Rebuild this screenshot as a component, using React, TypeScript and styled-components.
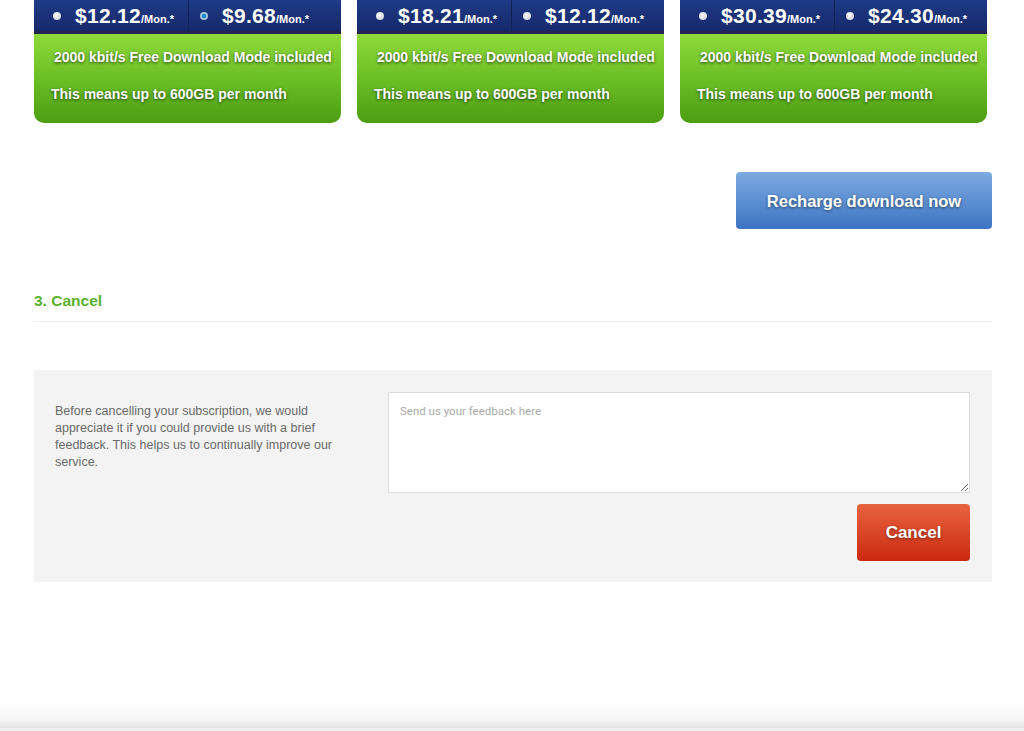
import React from 'react';
import styled, { createGlobalStyle } from 'styled-components';

const GlobalStyle = createGlobalStyle`
  html, body {
    margin: 0;
    padding: 0;
    background: #fff;
    font-family: "Liberation Sans", Arial, sans-serif;
  }
`;

const plans = [
  { a: '$12.12', b: '$9.68', selected: 1 },
  { a: '$18.21', b: '$12.12', selected: -1 },
  { a: '$30.39', b: '$24.30', selected: -1 },
];

function App() {
  return (
    <Page>
      <GlobalStyle />
      <Content>
        <Cards>
          {plans.map((p, i) => (
            <Card key={i}>
              <PriceBar>
                <PriceCell>
                  <Radio $active={p.selected === 0} />
                  <Price>{p.a}</Price>
                  <Per>/Mon.*</Per>
                </PriceCell>
                <PriceCell $divider>
                  <Radio $active={p.selected === 1} />
                  <Price>{p.b}</Price>
                  <Per>/Mon.*</Per>
                </PriceCell>
              </PriceBar>
              <GreenBody>
                <Feature>2000 kbit/s Free Download Mode included</Feature>
                <Note>This means up to 600GB per month</Note>
              </GreenBody>
            </Card>
          ))}
        </Cards>
        <ActionRow>
          <RechargeBtn>Recharge download now</RechargeBtn>
        </ActionRow>
        <SectionTitle>3. Cancel</SectionTitle>
        <CancelPanel>
          <Explain>
            Before cancelling your subscription, we would appreciate it if you could provide us with a brief
            feedback. This helps us to continually improve our service.
          </Explain>
          <FormCol>
            <Feedback placeholder="Send us your feedback here" />
            <CancelBtn>Cancel</CancelBtn>
          </FormCol>
        </CancelPanel>
      </Content>
      <FooterShadow />
    </Page>
  );
}

const Page = styled.div`
  width: 1024px;
  height: 731px;
  position: relative;
  overflow: hidden;
  display: flex;
  flex-direction: column;
`;

const Content = styled.div`
  width: 958px;
  margin: 0 0 0 34px;
  flex: 1;
`;

const Cards = styled.div`
  display: grid;
  grid-template-columns: repeat(3, 307px);
  column-gap: 16px;
`;

const Card = styled.div`
  border-radius: 0 0 10px 10px;
  overflow: hidden;
`;

const PriceBar = styled.div`
  height: 31px;
  display: grid;
  grid-template-columns: 154px 1fr;
  background: linear-gradient(#1e3a86, #17296a);
  border-bottom: 3px solid #222554;
`;

const PriceCell = styled.div<{ $divider?: boolean }>`
  display: flex;
  align-items: center;
  padding-left: ${(p) => (p.$divider ? '11px' : '19px')};
  border-left: ${(p) => (p.$divider ? '1px solid #122256' : 'none')};
  color: #fff;
`;

const Radio = styled.span<{ $active?: boolean }>`
  width: 8px;
  height: 8px;
  border-radius: 50%;
  background: ${(p) =>
    p.$active
      ? 'radial-gradient(circle, #1a8fd0 0 2px, #a9c6dc 2.5px)'
      : 'radial-gradient(circle at 40% 40%, #ffffff, #c2c5cf)'};
  margin-right: 14px;
`;

const Price = styled.span`
  font-size: 21px;
  font-weight: bold;
  letter-spacing: 0.3px;
`;

const Per = styled.span`
  font-size: 11px;
  font-weight: bold;
  margin-top: 6px;
`;

const GreenBody = styled.div`
  height: 89px;
  background: linear-gradient(#8fd93a, #6abf25 50%, #4d9d12);
  color: #fff;
  font-weight: bold;
  font-size: 14px;
  text-shadow: 0 1px 3px rgba(0, 0, 0, 0.65);
  padding: 15px 0 0 17px;
  box-sizing: border-box;
`;

const Feature = styled.div`
  padding-left: 3px;
  height: 37px;
`;

const Note = styled.div``;

const ActionRow = styled.div`
  display: flex;
  justify-content: flex-end;
  margin-top: 49px;
`;

const RechargeBtn = styled.button`
  width: 256px;
  height: 57px;
  border: none;
  border-radius: 4px;
  background: linear-gradient(#7dabe2, #3d74c2);
  color: #fff;
  font-family: "Liberation Sans", Arial, sans-serif;
  font-weight: bold;
  font-size: 16.5px;
  padding-top: 2px;
  text-shadow: 0 1px 3px rgba(0, 0, 0, 0.5);
  cursor: pointer;
`;

const SectionTitle = styled.h3`
  margin: 63px 0 0;
  padding-bottom: 11px;
  border-bottom: 1px solid #f1f1f1;
  color: #5bb12c;
  font-size: 15.5px;
  font-weight: bold;
`;

const CancelPanel = styled.div`
  margin-top: 48px;
  background: #f3f3f3;
  height: 212px;
  box-sizing: border-box;
  padding: 22px 22px 0 21px;
  display: flex;
  justify-content: space-between;
`;

const Explain = styled.p`
  width: 290px;
  margin: 11px 0 0;
  font-size: 12.5px;
  line-height: 17px;
  color: #6a6a6a;
`;

const FormCol = styled.div`
  width: 582px;
  display: flex;
  flex-direction: column;
  align-items: flex-end;
`;

const Feedback = styled.textarea`
  width: 100%;
  height: 101px;
  box-sizing: border-box;
  border: 1px solid #dedede;
  background: #fff;
  padding: 11px 11px;
  font-family: Roboto, "Liberation Sans", sans-serif;
  font-size: 11.5px;
  color: #444;
  &::placeholder {
    color: #aaa;
  }
`;

const CancelBtn = styled.button`
  margin-top: 11px;
  width: 113px;
  height: 57px;
  border: none;
  border-radius: 4px;
  background: linear-gradient(#e8633f, #cb2a10);
  color: #fff;
  font-family: "Liberation Sans", Arial, sans-serif;
  font-weight: bold;
  font-size: 17px;
  padding-top: 2px;
  text-shadow: 0 1px 3px rgba(0, 0, 0, 0.45);
  cursor: pointer;
`;

const FooterShadow = styled.div`
  position: absolute;
  left: 0;
  right: 0;
  bottom: 0;
  height: 28px;
  background: linear-gradient(#ffffff, #f6f6f6 60%, #e2e2e2 90%, #f0f0f0 91%);
`;

export default App;
